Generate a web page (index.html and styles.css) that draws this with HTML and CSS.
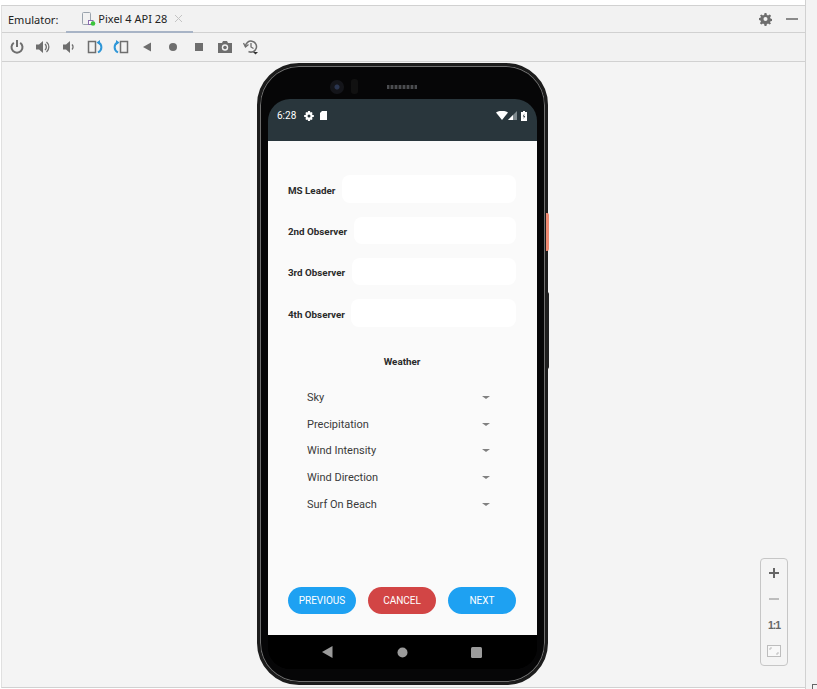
FILE: index.html
```html
<!DOCTYPE html>
<html lang="en">
<head>
  <meta charset="UTF-8">
  <title>Emulator</title>
  <link rel="stylesheet" href="styles.css">
</head>
<body>
<div class="ide">
  <div class="panel">
    <div class="tabbar">
      <span class="tool-title">Emulator:</span>
      <div class="tab">
        <svg class="tab-icon" width="14" height="14" viewBox="0 0 14 14">
          <rect x="0.5" y="0.5" width="8" height="12" rx="1" fill="none" stroke="#9aa3ad"/>
          <rect x="6.5" y="8.5" width="4.5" height="4" fill="#fff" stroke="#8b6bb0"/>
          <circle cx="11" cy="11.5" r="2.3" fill="#3bc43b"/>
        </svg>
        <span>Pixel 4 API 28</span>
        <svg class="tab-close" width="9" height="9" viewBox="0 0 9 9"><path d="M1 1l7 7M8 1l-7 7" stroke="#c4c4c4" stroke-width="1"/></svg>
      </div>
      <div class="tabbar-right">
        <svg width="13" height="13" viewBox="0 0 14 14"><path d="M6 0h2l.4 2 1.3.6 1.8-1L13 3l-1.100 1.800.5 1.200 1.600.5v2l-1.600.5-.5 1.200L13 11l-1.500 1.400-1.800-1-1.300.6L8 14H6l-.4-2-1.300-.6-1.800 1L1 11l1.100-1.800-.5-1.200L0 7.500v-2l1.600-.5.5-1.200L1 3l1.500-1.400 1.800 1 1.300-.6z" fill="#6e6e6e"/><circle cx="7" cy="6.500" r="2.200" fill="#f2f2f2"/></svg>
        <span class="minimize"></span>
      </div>
    </div>
    <div class="toolbar">
      <svg width="16" height="16" viewBox="0 0 16 16"><path d="M8 1v7" stroke="#6e6e6e" stroke-width="2" fill="none"/><path d="M4.800 3.800a5.500 5.500 0 1 0 6.400 0" stroke="#6e6e6e" stroke-width="2" fill="none"/></svg>
      <svg width="16" height="16" viewBox="0 0 16 16"><path d="M1 5.500h3L8 2v12l-4-3.500H1z" fill="#6e6e6e"/><path d="M10 5a4 4 0 0 1 0 6M11.500 3a6.500 6.500 0 0 1 0 10" stroke="#6e6e6e" stroke-width="1.300" fill="none"/></svg>
      <svg width="16" height="16" viewBox="0 0 16 16"><path d="M2 5.500h3L9 2v12l-4-3.500H2z" fill="#6e6e6e"/><path d="M11 5.500a3.500 3.500 0 0 1 0 5" stroke="#6e6e6e" stroke-width="1.300" fill="none"/></svg>
      <svg width="16" height="16" viewBox="0 0 16 16"><rect x="1.500" y="2.500" width="7" height="11" fill="none" stroke="#6e6e6e" stroke-width="1.500"/><path d="M11 3.500C15.500 5 15.500 11 11 13.500" fill="none" stroke="#2f97d8" stroke-width="2"/><path d="M9.500 3.500L13 1v5z" fill="#2f97d8"/></svg>
      <svg width="16" height="16" viewBox="0 0 16 16"><rect x="7.500" y="2.500" width="7" height="11" fill="none" stroke="#6e6e6e" stroke-width="1.500"/><path d="M5 3.500C.5 5 .5 11 5 13.500" fill="none" stroke="#2f97d8" stroke-width="2"/><path d="M6.500 3.500L3 1v5z" fill="#2f97d8"/></svg>
      <svg width="16" height="16" viewBox="0 0 16 16"><path d="M12 3.500v9L4 8z" fill="#6e6e6e"/></svg>
      <svg width="16" height="16" viewBox="0 0 16 16"><circle cx="8" cy="8" r="4" fill="#6e6e6e"/></svg>
      <svg width="16" height="16" viewBox="0 0 16 16"><rect x="4" y="4" width="8" height="8" fill="#6e6e6e"/></svg>
      <svg width="16" height="16" viewBox="0 0 16 16"><path d="M1 4h4l1-2h4l1 2h4v10H1z" fill="#6e6e6e"/><circle cx="8" cy="8.500" r="3.200" fill="#f2f2f2"/><circle cx="8" cy="8.500" r="1.800" fill="#6e6e6e"/></svg>
      <svg width="16" height="16" viewBox="0 0 16 16"><path d="M2.500 7.500a5.500 5.500 0 1 1 3 5" fill="none" stroke="#6e6e6e" stroke-width="1.500"/><path d="M.5 4l2 4 3-2.500" fill="none" stroke="#6e6e6e" stroke-width="1.300"/><path d="M8 4v4l2.500 1.500" fill="none" stroke="#6e6e6e" stroke-width="1.300"/><path d="M10 13h5l-2.500 2.500z" fill="#333"/></svg>
    </div>
    <div class="stage">
      <div class="phone">
        <span class="side-key power"></span>
        <span class="side-key volume"></span>
        <div class="phone-top">
          <span class="camera"></span>
          <span class="sensor"></span>
          <span class="speaker"></span>
        </div>
        <div class="screen">
          <div class="statusbar">
            <span class="clock">6:28</span>
            <svg width="10" height="10" viewBox="0 0 10 10"><path d="M4 0h2l.3 1.400 1-.4L8.700 2 8 3.100l.5 1L10 4.300v1.400l-1.500.3-.5 1L8.700 8 7.300 9l-1-.500L6 10H4l-.3-1.500-1 .5L1.300 8 2 6.900l-.5-.9L0 5.700V4.300l1.500-.2.500-1L1.300 2l1.400-1 1 .4z" fill="#fff"/><circle cx="5" cy="5" r="1.500" fill="#29363c"/></svg>
            <svg class="sd" width="7" height="9" viewBox="0 0 7 9"><path d="M2 0h5v9H0V2z" fill="#fff"/></svg>
            <div class="status-right">
              <svg width="12" height="9" viewBox="0 0 12 9"><path d="M0 1.500Q6-2 12 1.500L6 9z" fill="#fff"/></svg>
              <svg width="9" height="9" viewBox="0 0 9 9"><path d="M9 0v9H0z" fill="#7f8a8e"/><path d="M5 4v5H0z" fill="#fff"/></svg>
              <svg class="battery" width="6" height="10" viewBox="0 0 6 10"><path d="M2 0h2v1h2v9H0V1h2z" fill="#fff"/><path d="M3.400 2.500L1.800 5.500h1.100L2.600 8l1.600-3H3.100z" fill="#29363c"/></svg>
            </div>
          </div>
          <div class="content">
            <div class="field field-tall"><label>MS Leader</label><input type="text"></div>
            <div class="field"><label>2nd Observer</label><input type="text"></div>
            <div class="field"><label>3rd Observer</label><input type="text"></div>
            <div class="field field-tall"><label>4th Observer</label><input type="text"></div>
            <div class="section-title">Weather</div>
            <div class="spinners">
              <div class="spinner">Sky<span class="caret"></span></div>
              <div class="spinner">Precipitation<span class="caret"></span></div>
              <div class="spinner">Wind Intensity<span class="caret"></span></div>
              <div class="spinner">Wind Direction<span class="caret"></span></div>
              <div class="spinner">Surf On Beach<span class="caret"></span></div>
            </div>
            <div class="buttons">
              <button class="btn">PREVIOUS</button>
              <button class="btn btn-cancel">CANCEL</button>
              <button class="btn">NEXT</button>
            </div>
          </div>
          <div class="navbar">
            <svg width="11" height="12" viewBox="0 0 11 12"><path d="M10.500 0v12L0 6z" fill="#9b9b9b"/></svg>
            <svg width="11" height="11" viewBox="0 0 11 11"><circle cx="5.500" cy="5.500" r="5" fill="#9b9b9b"/></svg>
            <svg width="11" height="11" viewBox="0 0 11 11"><rect width="11" height="11" rx="1.500" fill="#9b9b9b"/></svg>
          </div>
        </div>
      </div>
      <div class="zoom-box">
        <svg width="12" height="12" viewBox="0 0 12 12"><path d="M6 1v10M1 6h10" stroke="#666" stroke-width="2"/></svg>
        <svg width="12" height="12" viewBox="0 0 12 12"><path d="M1 6h10" stroke="#bdbdbd" stroke-width="2"/></svg>
        <span class="zoom-one">1:1</span>
        <svg width="14" height="12" viewBox="0 0 14 12"><rect x="0.500" y="0.500" width="13" height="11" fill="#f8f8f8" stroke="#bdbdbd"/><path d="M3 5V3h2M11 7v2H9" fill="none" stroke="#bdbdbd"/></svg>
      </div>
    </div>
  </div>
  <div class="side-strip"><span class="resize-corner"></span></div>
</div>
</body>
</html>
```

FILE: styles.css
```css
html, body { margin: 0; padding: 0; }
body { width: 817px; height: 689px; overflow: hidden; background: #fff; font-family: "Noto Sans", sans-serif; }

.ide { display: flex; height: 689px; background: #fff; }
.panel { width: 803px; height: 681px; margin: 5px 0 0 1px; display: flex; flex-direction: column; background: #f4f4f4; border: 1px solid #d1d1d1; border-left-color: #e0e0e0; border-right: none; }
.side-strip { flex: 1; position: relative; background: #f3f3f3; border-left: 1px solid #d1d1d1; }
.resize-corner { position: absolute; left: 6px; top: 684px; width: 6px; height: 6px; border-top: 1px solid #666; border-left: 1px solid #666; }

.tabbar { height: 26px; display: flex; align-items: center; background: #f2f2f2; border-bottom: 1px solid #d1d1d1; font-size: 11px; color: #222; padding-left: 6px; }
.tool-title { margin-right: 8px; }
.tab { display: flex; align-items: center; height: 26px; padding: 0 10px 0 16px; border-bottom: 2px solid #a8b4c6; box-sizing: border-box; margin-top: 1px; }
.tab-icon { margin-right: 2px; }
.tab-close { margin-left: 7px; }
.tabbar-right { margin-left: auto; display: flex; align-items: center; gap: 14px; padding-right: 7px; }
.minimize { width: 12px; height: 2px; background: #8a8a8a; }

.toolbar { height: 28px; display: flex; align-items: center; gap: 10px; padding-left: 7px; background: #f2f2f2; border-bottom: 1px solid #d1d1d1; }

.stage { flex: 1; position: relative; display: flex; align-items: flex-start; padding: 1px 0 0 255px; }

.phone { position: relative; width: 269px; height: 570px; padding: 33px 8px 13px 8px; background: #060607; border-radius: 42px; border: 3px solid #1c1c1c; box-shadow: inset 0 0 0 1px #6f6f6f; display: flex; flex-direction: column; }
.side-key { position: absolute; left: calc(100% + 1px); width: 3px; background: #1f1f1f; border-radius: 0 2px 2px 0; }
.power { top: 147px; height: 38px; background: #ef8a72; }
.volume { top: 226px; height: 77px; }

.phone-top { position: absolute; top: 13px; left: 70px; display: flex; align-items: center; }
.camera { width: 14px; height: 14px; border-radius: 50%; background: radial-gradient(circle, #2a3550 0 2px, #14151a 3px); }
.sensor { width: 7px; height: 15px; margin-left: 7px; border-radius: 3px; background: #111; }
.speaker { width: 30px; height: 4px; margin-left: 29px; background: repeating-linear-gradient(90deg, #4a4c50 0 2px, #222 2px 4px); }

.screen { width: 269px; height: 570px; display: flex; flex-direction: column; overflow: hidden; border-radius: 22px; background: #000; }
.statusbar { height: 42px; flex: none; display: flex; align-items: flex-start; background: #29363c; color: #fff; padding: 11px 10px 0 9px; box-sizing: border-box; font-family: Roboto, sans-serif; font-size: 10px; line-height: 12px; }
.statusbar svg { margin-top: 1px; }
.clock { width: 27px; }
.sd { margin-left: 6px; }
.status-right { margin-left: auto; display: flex; }
.status-right .battery { margin-left: 4px; }

.content { flex: none; height: 494px; background: #fafafa; padding: 34px 21px 0 20px; box-sizing: border-box; display: flex; flex-direction: column; font-family: Roboto, sans-serif; color: #2b2b2b; }

.field { display: flex; align-items: center; height: 27px; margin-bottom: 14px; }
.field label { font-size: 9.8px; font-weight: 700; margin-right: 6.5px; padding-top: 2px; white-space: nowrap; }
.field input { flex: 1; min-width: 0; height: 100%; box-sizing: border-box; border: none; border-radius: 8px; background: #fff; }
.field-tall { height: 28px; }

.section-title { font-size: 9.8px; font-weight: 700; text-align: center; margin-top: 15px; line-height: 12px; }

.spinners { margin-top: 16px; padding: 0 26px 0 19px; font-size: 11px; color: #3a3a3a; }
.spinner { height: 26.8px; display: flex; align-items: center; justify-content: space-between; }
.caret { width: 0; height: 0; border: 4px solid transparent; border-top: 3px solid #808080; border-bottom: 0; }

.buttons { margin-top: auto; margin-bottom: 21px; display: flex; justify-content: space-between; }
.btn { width: 68px; height: 27px; border: none; border-radius: 14px; background: #1ea1f2; color: #fff; font-family: Roboto, sans-serif; font-size: 10px; font-weight: 400; padding: 0; }
.btn-cancel { background: #d24545; }

.navbar { height: 34px; flex: none; display: flex; align-items: center; justify-content: space-between; padding: 0 55px 0 54px; background: #000; }

.zoom-box { position: absolute; top: 496px; left: 758px; width: 28px; height: 108px; padding: 1px 0; border: 1px solid #c6c6c6; border-radius: 4px; background: #f4f4f4; display: grid; grid-auto-rows: 26px; place-items: center; box-sizing: border-box; }
.zoom-one { font-family: "Liberation Sans", sans-serif; font-size: 10.5px; letter-spacing: -1px; font-weight: 700; color: #666; line-height: 12px; }
```
